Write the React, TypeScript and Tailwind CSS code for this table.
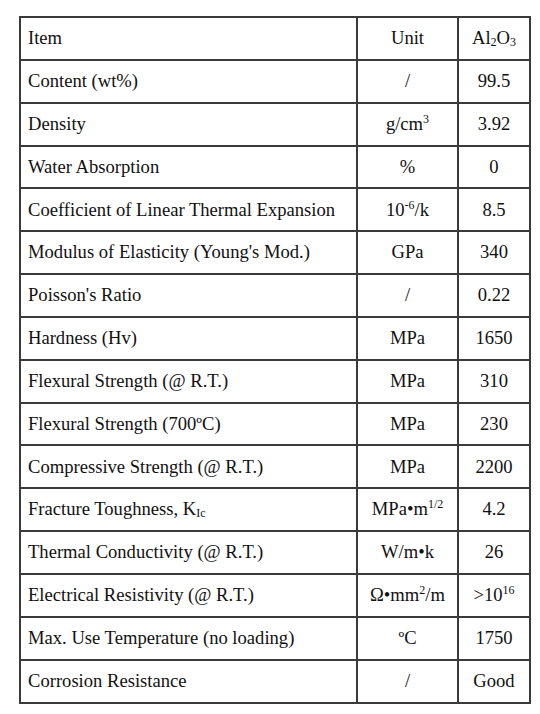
import React from "react";

type Row = { item: React.ReactNode; unit: React.ReactNode; value: React.ReactNode };

const Sup = ({ children }: { children: React.ReactNode }) => (
  <sup className="text-[12px] relative -top-[7px]">{children}</sup>
);
const Sub = ({ children }: { children: React.ReactNode }) => (
  <sub className="text-[12px] relative top-[2px]">{children}</sub>
);

const rows: Row[] = [
  { item: "Content (wt%)", unit: "/", value: "99.5" },
  { item: "Density", unit: <>g/cm<Sup>3</Sup></>, value: "3.92" },
  { item: "Water Absorption", unit: "%", value: "0" },
  { item: "Coefficient of Linear Thermal Expansion", unit: <>10<Sup>-6</Sup>/k</>, value: "8.5" },
  { item: "Modulus of Elasticity (Young's Mod.)", unit: "GPa", value: "340" },
  { item: "Poisson's Ratio", unit: "/", value: "0.22" },
  { item: "Hardness (Hv)", unit: "MPa", value: "1650" },
  { item: "Flexural Strength (@ R.T.)", unit: "MPa", value: "310" },
  { item: "Flexural Strength (700ºC)", unit: "MPa", value: "230" },
  { item: "Compressive Strength (@ R.T.)", unit: "MPa", value: "2200" },
  { item: <>Fracture Toughness, K<Sub>Ic</Sub></>, unit: <>MPa•m<Sup>1/2</Sup></>, value: "4.2" },
  { item: "Thermal Conductivity (@ R.T.)", unit: "W/m•k", value: "26" },
  { item: "Electrical Resistivity (@ R.T.)", unit: <>Ω•mm<Sup>2</Sup>/m</>, value: <>&gt;10<Sup>16</Sup></> },
  { item: "Max. Use Temperature (no loading)", unit: "ºC", value: "1750" },
  { item: "Corrosion Resistance", unit: "/", value: "Good" },
];

const cell = "border-2 border-[#3a3a3a] h-[42.85px] p-0 align-middle whitespace-nowrap";

export default function App() {
  return (
    <div className="w-[540px] h-[714px] bg-white pt-[16px] pl-[19px] text-[#111] font-['Liberation_Serif','Times_New_Roman',serif] text-[18.6px] leading-none">
      <table className="table-fixed border-collapse w-[510px]">
        <colgroup>
          <col className="w-[337px]" />
          <col className="w-[101px]" />
          <col className="w-[72px]" />
        </colgroup>
        <tbody>
          <tr>
            <td className={`${cell} pl-[7px]`}>Item</td>
            <td className={`${cell} text-center`}>Unit</td>
            <td className={`${cell} text-center`}>
              Al<Sub>2</Sub>O<Sub>3</Sub>
            </td>
          </tr>
          {rows.map((r, i) => (
            <tr key={i}>
              <td className={`${cell} pl-[7px]`}>{r.item}</td>
              <td className={`${cell} text-center`}>{r.unit}</td>
              <td className={`${cell} text-center`}>{r.value}</td>
            </tr>
          ))}
        </tbody>
      </table>
    </div>
  );
}
